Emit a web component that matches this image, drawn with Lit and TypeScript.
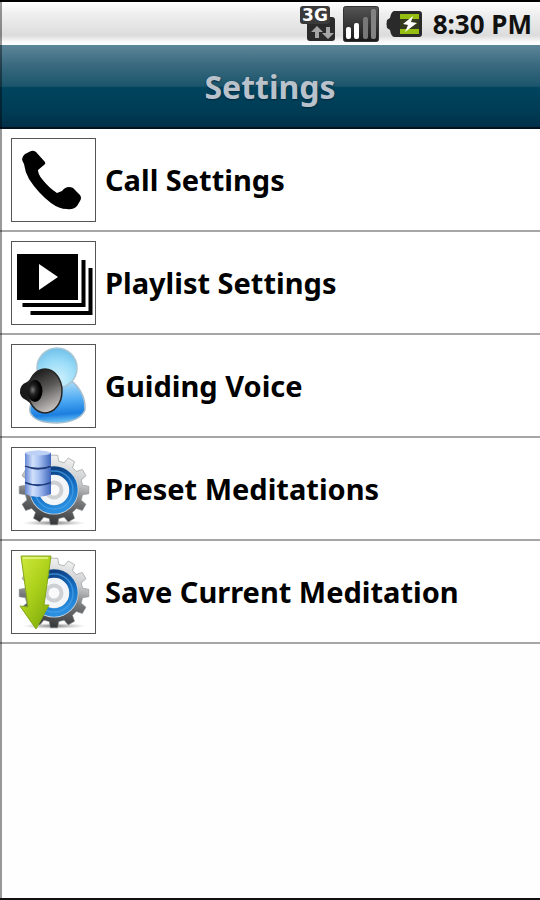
import { LitElement, html, css, svg } from "lit";
import { customElement } from "lit/decorators.js";

const GEAR_X = 43;
const GEAR_Y = 43;

function gearPath(teeth: number, outer: number, root: number): string {
  const step = (Math.PI * 2) / teeth;
  const at = (r: number, a: number) =>
    `${(GEAR_X + r * Math.cos(a)).toFixed(2)} ${(GEAR_Y + r * Math.sin(a)).toFixed(2)}`;
  const points: string[] = [];
  for (let i = 0; i < teeth; i++) {
    const a = i * step;
    points.push(
      at(root, a - step * 0.32),
      at(outer, a - step * 0.2),
      at(outer, a + step * 0.2),
      at(root, a + step * 0.32)
    );
  }
  return `M${points.join("L")}Z`;
}

const gear = svg`
  <defs>
    <linearGradient id="steel" x1=".6" y1="0" x2=".4" y2="1">
      <stop offset="0" stop-color="#f4f4f4" />
      <stop offset=".35" stop-color="#c4c6c8" />
      <stop offset=".6" stop-color="#77797b" />
      <stop offset="1" stop-color="#303234" />
    </linearGradient>
    <linearGradient id="ring" x1=".3" y1="0" x2=".6" y2="1">
      <stop offset="0" stop-color="#0c3f80" />
      <stop offset=".5" stop-color="#1670c4" />
      <stop offset="1" stop-color="#2b8fe0" />
    </linearGradient>
    <radialGradient id="shade">
      <stop offset="0" stop-color="#555" stop-opacity=".8" />
      <stop offset="1" stop-color="#999" stop-opacity="0" />
    </radialGradient>
  </defs>
  <ellipse cx="43" cy="76" rx="32" ry="3" fill="url(#shade)" />
  <path d=${gearPath(12, 35, 29)} fill="url(#steel)" stroke="#8c8e90" stroke-width=".6" stroke-linejoin="round" />
  <circle cx="43" cy="43" r="24.500" fill="#d4dae0" />
  <circle cx="43" cy="43" r="19.500" fill="none" stroke="url(#ring)" stroke-width="8.5" />
  <circle cx="43" cy="43" r="19" fill="none" stroke="#4aa2ea" stroke-width="1.500" opacity=".7" />
  <circle cx="43" cy="43" r="15" fill="#f3f6f9" />
  <circle cx="43" cy="43" r="7.5" fill="#fafafa" stroke="#cdd0d3" stroke-width="4" />
`;

const phone = svg`
  <path d="M14 16L19 13.5Q22 12 25 14L34 24Q35 26 33 27L27 32Q27 36 31 41Q38 50 46 55L51 53Q54 49 58 49Q62 49 64 52L69 57Q71 60 69 63L66 68Q62 72 56 71Q48 71 40 65Q27 55 18 41Q14 34 13 26Q9 20 14 16Z" fill="#000" />
`;

const playlist = svg`
  <path d="M6 13H67V59H6Z" fill="#000" />
  <path d="M28 23L47 36L28 49Z" fill="#fff" />
  <path d="M72.500 19V64H11.500M79.500 27V72H19.500" fill="none" stroke="#000" stroke-width="4" />
`;

const voice = svg`
  <defs>
    <radialGradient id="head" cx=".5" cy=".8" r=".8">
      <stop offset="0" stop-color="#d4f3fe" />
      <stop offset=".6" stop-color="#9adcf8" />
      <stop offset="1" stop-color="#6fc0ea" />
    </radialGradient>
    <linearGradient id="body" x1=".4" y1="0" x2=".5" y2="1">
      <stop offset="0" stop-color="#b4e2fb" />
      <stop offset=".5" stop-color="#4aa8f2" />
      <stop offset=".8" stop-color="#1c7ee0" />
      <stop offset="1" stop-color="#6cc6f6" />
    </linearGradient>
    <linearGradient id="cone" x1=".3" y1="0" x2=".7" y2="1">
      <stop offset="0" stop-color="#161616" />
      <stop offset=".45" stop-color="#5c5a59" />
      <stop offset="1" stop-color="#d2cfcc" />
    </linearGradient>
    <radialGradient id="cap" cx=".35" cy=".45">
      <stop offset="0" stop-color="#7b7b7b" />
      <stop offset=".45" stop-color="#222" />
      <stop offset="1" stop-color="#000" />
    </radialGradient>
  </defs>
  <path d="M19 68Q17 56 34 47Q52 33 62 38Q75 50 74 66Q69 78 46 79Q23 79 19 68Z" fill="url(#body)" stroke="#a9bfce" stroke-width="1.500" />
  <circle cx="46" cy="24" r="20" fill="url(#head)" stroke="#a9c6d4" stroke-width="1.500" />
  <path d="M9 49Q8 41 16 38L29 27L30 67L15 56Q10 54 9 49Z" fill="#1a1a1a" />
  <ellipse cx="34" cy="47" rx="17" ry="22" fill="url(#cone)" stroke="#252525" stroke-width="1.500" />
  <ellipse cx="24" cy="47" rx="7.500" ry="11" fill="url(#cap)" />
`;

const preset = svg`
  ${gear}
  <defs>
    <linearGradient id="disk">
      <stop offset="0" stop-color="#6588d6" />
      <stop offset=".3" stop-color="#d2e1fb" />
      <stop offset=".55" stop-color="#a5bff0" />
      <stop offset="1" stop-color="#3f66bc" />
    </linearGradient>
  </defs>
  <path d="M14 36Q27 41 40 36V47Q27 53 14 47Z" fill="url(#disk)" />
  <path d="M14 20Q27 25 40 20V35Q27 41 14 35Z" fill="url(#disk)" />
  <path d="M14 6Q27 1 40 6V18Q27 24 14 18Z" fill="url(#disk)" />
  <ellipse cx="27" cy="6" rx="12.500" ry="2.500" fill="#bdd0f6" />
  <path d="M14 19Q27 24.500 40 19M14 35.500Q27 41 40 35.500" fill="none" stroke="#1c3a7c" stroke-width="1.800" />
`;

const save = svg`
  ${gear}
  <defs>
    <linearGradient id="lime" x1="0" y1="0" x2=".7" y2="1">
      <stop offset="0" stop-color="#cfe93c" />
      <stop offset=".5" stop-color="#aed21c" />
      <stop offset="1" stop-color="#83ae0c" />
    </linearGradient>
  </defs>
  <path d="M10 6H40L33 55H38L25 79L9 56L17 57Z" fill="url(#lime)" stroke="#86a81c" stroke-width="1" stroke-linejoin="round" />
  <path d="M12 8H37" stroke="#e6f590" stroke-width="1.500" />
`;

const items = [
  { label: "Call Settings", art: phone },
  { label: "Playlist Settings", art: playlist },
  { label: "Guiding Voice", art: voice },
  { label: "Preset Meditations", art: preset },
  { label: "Save Current Meditation", art: save },
];

@customElement("settings-row")
export class SettingsRow extends LitElement {
  static properties = { label: {}, art: { attribute: false } };
  declare label: string;
  declare art: unknown;

  static styles = css`
    :host {
      display: block;
    }
    .row {
      display: flex;
      align-items: center;
      gap: 9px;
      width: 100%;
      box-sizing: border-box;
      margin: 0;
      padding: 9px 9px 8px 11px;
      border: 0;
      border-bottom: 2px solid #a6a6a6;
      background: #fff;
      color: #000;
      font: 700 29px/34px "Noto Sans", "Open Sans", sans-serif;
      text-align: left;
      cursor: pointer;
    }
    .frame {
      flex: none;
      width: 83px;
      height: 82px;
      border: 1px solid #555;
    }
  `;

  render() {
    return html`<button class="row" type="button">
      <svg class="frame" viewBox="1 1 83 82" aria-hidden="true">${this.art}</svg>
      <span>${this.label}</span>
    </button>`;
  }
}

@customElement("app-root")
export class AppRoot extends LitElement {
  static styles = css`
    :host {
      display: block;
      font-family: "Noto Sans", "Open Sans", sans-serif;
    }
    .screen {
      position: relative;
      display: flex;
      flex-direction: column;
      box-sizing: border-box;
      min-height: 100vh;
      border-top: 2px solid #000;
      border-bottom: 2px solid #111;
      background: #fefefe;
    }
    .screen::after {
      content: "";
      position: absolute;
      inset: 0 auto 0 0;
      width: 2px;
      background: rgba(0, 0, 0, 0.4);
      pointer-events: none;
    }
    .status {
      display: flex;
      align-items: center;
      justify-content: flex-end;
      gap: 7px;
      height: 43px;
      padding-right: 8px;
      background: linear-gradient(#fff, #f0f0f0 25%, #dcdcdc 78%, #f8f8f8 92%, #fff);
    }
    .status svg {
      display: block;
      overflow: visible;
    }
    .clock {
      margin-left: 4px;
      color: #111;
      font-size: 26px;
      font-weight: 700;
      line-height: 32px;
    }
    .title {
      box-sizing: border-box;
      margin: 0;
      padding: 26px 0 24px;
      border-bottom: 2px solid #001220;
      background: linear-gradient(#5c8599, #39697e 25%, #1c566c 50%, #00445e 52%, #003c55 80%, #003049);
      color: #b9c1cb;
      font-size: 32px;
      font-weight: 700;
      line-height: 32px;
      text-align: center;
      text-shadow: 0 1px 2px #00283c;
    }
    .list {
      margin: 0;
      padding: 0;
      list-style: none;
    }
  `;

  render() {
    return html`
      <div class="screen">
        <div class="status">
          <svg width="36" height="36" viewBox="0 0 36 36" role="img" aria-label="3G data">
            <rect x="7" y="11" width="28" height="24" rx="3" fill="#2b2b2b" />
            <rect x="0" y="0" width="30" height="18" rx="3" fill="#3a3a3a" />
            <text x="15" y="15" text-anchor="middle" fill="#fff" font-family="DejaVu Sans" font-weight="700" font-size="17">3G</text>
            <path d="M17 20L23 26H19V32H15V26H11ZM28 33L22 27H26V21H30V27H34Z" fill="#a6a6a6" />
          </svg>
          <svg width="36" height="36" viewBox="0 0 36 36" role="img" aria-label="Signal">
            <defs>
              <linearGradient id="dark" x2="0" y2="1">
                <stop offset="0" stop-color="#555" />
                <stop offset="1" stop-color="#191919" />
              </linearGradient>
            </defs>
            <rect x=".5" y=".5" width="35" height="35" rx="2" fill="url(#dark)" stroke="#333" />
            <rect x="3" y="21" width="5" height="12" rx="2" fill="#fff" />
            <rect x="11" y="17" width="5" height="16" rx="2" fill="#fff" />
            <rect x="20" y="11" width="5" height="22" rx="2" fill="#777" />
            <rect x="28" y="3" width="5" height="30" rx="2" fill="#828282" />
          </svg>
          <svg width="36" height="28" viewBox="0 0 36 28" role="img" aria-label="Battery charging">
            <path d="M8 1H33Q36 1 36 4V24Q36 27 33 27H8Q5 26 4 20L1 18Q0 14 1 10L4 8Q5 2 8 1Z" fill="#2a2a2a" />
            <path d="M14 4H33V9H14ZM14 19H33V24H14Z" fill="#95bf10" />
            <path d="M14 9H33V19H14Z" fill="#35391f" />
            <path d="M27 6L17 14L22 15L19 22L31 13L25 12Z" fill="#fff" />
          </svg>
          <time class="clock">8:30 PM</time>
        </div>
        <h1 class="title">Settings</h1>
        <ul class="list">
          ${items.map(
            (item) => html`<li><settings-row .label=${item.label} .art=${item.art}></settings-row></li>`
          )}
        </ul>
      </div>
    `;
  }
}
